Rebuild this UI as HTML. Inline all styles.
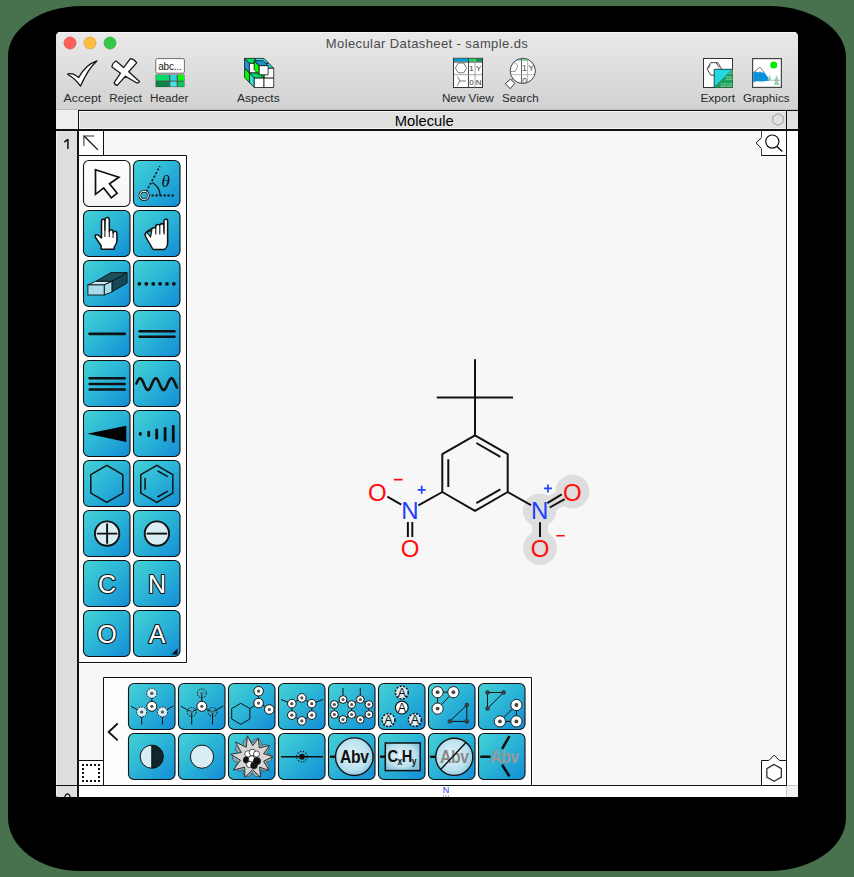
<!DOCTYPE html>
<html><head><meta charset="utf-8"><style>
html,body{margin:0;padding:0;background:rgb(71,114,77)}
body{width:854px;height:877px;overflow:hidden}
svg{display:block;font-family:"Liberation Sans",sans-serif}
</style></head><body>
<svg width="854" height="877" viewBox="0 0 854 877">
<defs>
<linearGradient id="bg" x1="0" y1="0" x2="1" y2="1"><stop offset="0" stop-color="#46d2d6"/><stop offset="0.5" stop-color="#2ab3d6"/><stop offset="1" stop-color="#128cd6"/></linearGradient>
<linearGradient id="wg" x1="0" y1="0" x2="0" y2="1"><stop offset="0" stop-color="#fefefe"/><stop offset="1" stop-color="#f4f4f4"/></linearGradient>
<linearGradient id="tbg" x1="0" y1="0" x2="0" y2="1"><stop offset="0" stop-color="#e9e9e9"/><stop offset="1" stop-color="#d2d2d2"/></linearGradient>
</defs>
<path d="M82,6 L769,6 A77,51 0 0 1 846,57 L846,818 A77,53 0 0 1 769,871 L80,871 A72,53 0 0 1 8,818 L8,56 A74,50 0 0 1 82,6 Z" fill="#000"/>
<clipPath id="wc"><path d="M61,32 L793,32 Q798,32 798,37 L798,797 L58.5,797 Q56,797 56,794.5 L56,37 Q56,32 61,32 Z"/></clipPath>
<g clip-path="url(#wc)">
<rect x="56" y="32" width="742" height="765" fill="#f7f7f7"/>
<rect x="56" y="32" width="742" height="77" fill="url(#tbg)"/>
<rect x="56" y="32" width="742" height="1" fill="#f4f4f4"/>
<rect x="56" y="109" width="742" height="1" fill="#bcbcbc"/>
<rect x="56" y="110" width="22" height="19" fill="#efefef"/>
<rect x="79" y="111" width="707" height="18" fill="#e0e0e0"/>
<rect x="79" y="111" width="707" height="1" fill="#f4f4f4"/><rect x="79" y="128" width="707" height="1" fill="#f2f2f2"/><rect x="79" y="111" width="1" height="18" fill="#f2f2f2"/>
<rect x="787" y="110" width="11" height="19" fill="#e0e0e0"/>
<rect x="78" y="110" width="720" height="1" fill="#111"/>
<rect x="78" y="110" width="1" height="20" fill="#111"/>
<rect x="786" y="110" width="1" height="20" fill="#111"/>
<rect x="56" y="129" width="742" height="2" fill="#111"/>
<rect x="57" y="131" width="20" height="654" fill="#dedede"/>
<rect x="56" y="131" width="1" height="666" fill="#efefef"/>
<rect x="77" y="131" width="2" height="666" fill="#111"/>
<rect x="786" y="131" width="1" height="655" fill="#111"/>
<rect x="787" y="131" width="11" height="655" fill="#fff"/>
<rect x="56" y="785" width="731" height="1" fill="#111"/>
<rect x="57" y="786" width="20" height="11" fill="#dedede"/>
<rect x="79" y="786" width="707" height="11" fill="#fff"/>
<rect x="787" y="785" width="11" height="1" fill="#c8c8c8"/>
<rect x="786" y="786" width="1" height="11" fill="#c8c8c8"/>
<rect x="787" y="786" width="11" height="11" fill="#f2f2f2"/>
</g>
<circle cx="70" cy="43" r="6" fill="#fc605c" stroke="#df4a45" stroke-width="0.7"/>
<circle cx="90" cy="43" r="6" fill="#fdbc40" stroke="#de9f34" stroke-width="0.7"/>
<circle cx="110" cy="43" r="6" fill="#34c84a" stroke="#27aa35" stroke-width="0.7"/>
<text x="427" y="47.6" font-size="13" fill="#4a4a4a" text-anchor="middle" letter-spacing="0.4">Molecular Datasheet - sample.ds</text>
<text x="63.6" y="101.5" font-size="10" fill="#2a2a2a" textLength="37.6" lengthAdjust="spacingAndGlyphs">Accept</text>
<text x="109.2" y="101.5" font-size="10" fill="#2a2a2a" textLength="32.8" lengthAdjust="spacingAndGlyphs">Reject</text>
<text x="150.0" y="101.5" font-size="10" fill="#2a2a2a" textLength="38.4" lengthAdjust="spacingAndGlyphs">Header</text>
<text x="237.1" y="101.5" font-size="10" fill="#2a2a2a" textLength="42.6" lengthAdjust="spacingAndGlyphs">Aspects</text>
<text x="441.9" y="101.5" font-size="10" fill="#2a2a2a" textLength="51.9" lengthAdjust="spacingAndGlyphs">New View</text>
<text x="502.0" y="101.5" font-size="10" fill="#2a2a2a" textLength="36.6" lengthAdjust="spacingAndGlyphs">Search</text>
<text x="700.4" y="101.5" font-size="10" fill="#2a2a2a" textLength="34.6" lengthAdjust="spacingAndGlyphs">Export</text>
<text x="742.9" y="101.5" font-size="10" fill="#2a2a2a" textLength="46.7" lengthAdjust="spacingAndGlyphs">Graphics</text>
<text x="394.8" y="125.6" font-size="14.3" fill="#000" textLength="59" lengthAdjust="spacingAndGlyphs">Molecule</text>
<path d="M67.9,139 L67.9,149 M67.9,139.3 L64.3,142.2" fill="none" stroke="#111" stroke-width="1.5" stroke-linecap="butt"/>
<path d="M67.6,74.2 C71,72.6 75,74.3 78.6,77.6 C83,69.5 89,63.5 96.9,60.9 C91.5,65.5 85.5,74.5 80.5,86.1 C77,81 72.5,77 67.6,74.2 Z" fill="#fff" stroke="#111" stroke-width="1.3" stroke-linejoin="round"/>
<path d="M116.1,61 L123.6,67.6 L130.4,58.7 Q134.5,59.3 136.7,62.9 L128.7,71.8 L139.5,81.6 Q138.3,83.3 136.4,82.8 L125.4,76.2 L117.2,85.4 Q114.5,85 114.2,82.6 L120.5,73.2 L111.9,66.9 Q112.3,63 116.1,61 Z" fill="#fff" stroke="#1a1a1a" stroke-width="1.3" stroke-linejoin="round"/>
<rect x="155.8" y="58.6" width="28.6" height="14.6" rx="1.5" fill="#fff" stroke="#6e6e6e" stroke-width="1"/>
<text x="158.2" y="70" font-size="10" fill="#222" letter-spacing="-0.2">abc...</text>
<rect x="155.5" y="74.5" width="29" height="12.6" fill="#555"/>
<rect x="156" y="75" width="13" height="5.6" fill="#00dd66"/>
<rect x="170.3" y="75" width="6.4" height="5.6" fill="#2ad4da"/>
<rect x="178" y="75" width="6" height="5.6" fill="#00ff00"/>
<rect x="156" y="81.6" width="13" height="5" fill="#008844"/>
<rect x="170.3" y="81.6" width="6.4" height="5" fill="#48e0e6"/>
<rect x="178" y="81.6" width="6" height="5" fill="#00cc55"/>
<polygon points="254.30,87.50 249.45,82.55 249.45,72.95 254.30,77.90" fill="#33dddd" stroke="#111" stroke-width="0.8" stroke-linejoin="round"/><polygon points="249.45,82.55 244.60,77.60 244.60,68.00 249.45,72.95" fill="#00ff00" stroke="#111" stroke-width="0.8" stroke-linejoin="round"/><polygon points="249.45,72.95 244.60,68.00 244.60,58.40 249.45,63.35" fill="#1e90d8" stroke="#111" stroke-width="0.8" stroke-linejoin="round"/><polygon points="249.45,63.35 259.15,63.35 254.30,58.40 244.60,58.40" fill="#00dd66" stroke="#111" stroke-width="0.8" stroke-linejoin="round"/><polygon points="259.15,63.35 268.85,63.35 264.00,58.40 254.30,58.40" fill="#33dddd" stroke="#111" stroke-width="0.8" stroke-linejoin="round"/><polygon points="264.00,68.30 273.70,68.30 268.85,63.35 259.15,63.35" fill="#33dddd" stroke="#111" stroke-width="0.8" stroke-linejoin="round"/><polygon points="254.30,87.50 264.00,87.50 264.00,77.90 254.30,77.90" fill="#fff" stroke="#111" stroke-width="0.8" stroke-linejoin="round"/><polygon points="264.00,87.50 273.70,87.50 273.70,77.90 264.00,77.90" fill="#fff" stroke="#111" stroke-width="0.8" stroke-linejoin="round"/><polygon points="264.00,77.90 273.70,77.90 273.70,68.30 264.00,68.30" fill="#fff" stroke="#111" stroke-width="0.8" stroke-linejoin="round"/><polygon points="249.45,72.95 259.15,72.95 259.15,63.35 249.45,63.35" fill="#fff" stroke="#111" stroke-width="0.8" stroke-linejoin="round"/><polygon points="254.30,77.90 264.00,77.90 259.15,72.95 249.45,72.95" fill="#00dd66" stroke="#111" stroke-width="0.8" stroke-linejoin="round"/><polygon points="264.00,77.90 259.15,72.95 259.15,63.35 264.00,68.30" fill="#00ff00" stroke="#111" stroke-width="0.8" stroke-linejoin="round"/><polygon points="259.20,65.70 254.20,60.70 254.20,69.70 259.20,74.80" fill="#00ff00" stroke="#111" stroke-width="0.8" stroke-linejoin="round"/><polygon points="259.20,65.70 254.20,60.70 263.20,60.70 268.10,65.70" fill="#1e90d8" stroke="#111" stroke-width="0.8" stroke-linejoin="round"/><polygon points="259.20,65.70 268.10,65.70 268.10,74.80 259.20,74.80" fill="#fff" stroke="#111" stroke-width="0.8" stroke-linejoin="round"/>
<rect x="453.5" y="58.3" width="29" height="29.2" fill="#fff" stroke="#333" stroke-width="1"/><rect x="454" y="58.8" width="14.3" height="2.8" fill="#00a0e4"/><rect x="468.8" y="58.8" width="6" height="2.8" fill="#00e060"/><rect x="475.2" y="58.8" width="6.8" height="2.8" fill="#009944"/><rect x="453.5" y="61.6" width="29" height="0.9" fill="#333"/><rect x="468" y="58.3" width="0.9" height="29.2" fill="#333"/><rect x="474.6" y="58.3" width="0.9" height="29.2" fill="#999"/><rect x="454" y="74.3" width="28" height="0.9" fill="#999"/><polygon points="466.60,67.90 463.80,63.05 458.20,63.05 455.40,67.90 458.20,72.75 463.80,72.75" fill="none" stroke="#666" stroke-width="0.9"/><path d="M457.5,76.6 L460,81 L457.2,85.6 M460,81 L465.8,81" fill="none" stroke="#666" stroke-width="0.9"/><g font-size="8" fill="#333" text-anchor="middle"><text x="471.4" y="71.4">1</text><text x="478.6" y="71.4">Y</text><text x="471.4" y="84.6">0</text><text x="478.6" y="84.6">N</text></g>
<clipPath id="sc"><circle cx="522.8" cy="70.9" r="12.3"/></clipPath>
<circle cx="522.8" cy="70.9" r="12.6" fill="#fff"/>
<g clip-path="url(#sc)">
<rect x="510" y="58" width="11" height="3" fill="#9cd8ec"/><rect x="521.5" y="58" width="6" height="3" fill="#88dd99"/>
<rect x="521" y="58" width="0.9" height="26" fill="#555"/><rect x="527.2" y="58" width="0.9" height="26" fill="#aaa"/>
<rect x="509" y="74.3" width="28" height="0.9" fill="#aaa"/>
<path d="M515,62.5 L518,66 L515,71.5 L508,71.5" fill="none" stroke="#888" stroke-width="0.9"/>
<g font-size="9" fill="#555" text-anchor="middle"><text x="524.4" y="71.2">1</text><text x="531.2" y="71.2">Y</text><text x="524.4" y="84">0</text></g>
</g>
<circle cx="522.8" cy="70.9" r="12.6" fill="none" stroke="#444" stroke-width="1"/>
<path d="M512.8,78.8 L511,80.5" stroke="#444" stroke-width="1"/>
<polygon points="505.3,83.7 510.2,88.7 514.9,83.3 510.4,79.1" fill="#fff" stroke="#333" stroke-width="1" stroke-linejoin="round"/>
<rect x="703.5" y="58.5" width="29" height="29" fill="#fff" stroke="#333" stroke-width="1"/><polygon points="721.50,68.90 717.90,62.66 710.70,62.66 707.10,68.90 710.70,75.14 717.90,75.14" fill="none" stroke="#333" stroke-width="0.9"/><path d="M710.3,64.5 L708.3,68.5 M716,62.6 L719.2,67.8" stroke="#333" stroke-width="0.8"/><polygon points="714.2,69.3 732.6,69.3 714.2,87.6" fill="#22d8dd" stroke="#0d3a44" stroke-width="0.9"/><polygon points="732.6,69.3 732.6,87.6 714.5,87.6" fill="#1ea05a"/><clipPath id="gt"><polygon points="732.6,69.3 732.6,87.6 714.5,87.6"/></clipPath><g clip-path="url(#gt)" font-size="5.6" fill="#a8dcbc"><text x="727.5" y="73.5">01</text><text x="725.5" y="80">011</text><text x="720" y="86.8">1010</text></g>
<rect x="752.6" y="58.6" width="28.8" height="28.8" fill="#fff" stroke="#444" stroke-width="1.2"/><circle cx="773.7" cy="65.1" r="3.5" fill="#00ee00"/><path d="M753.3,72.6 L759.9,67.2 L764,72" fill="none" stroke="#555" stroke-width="0.8"/><path d="M753.2,72.5 L756,71.6 L758,72.5 L760,71.5 L762,72.8 L764,72 L770.2,80.5 L762,81.5 L756,81.2 L753.2,82.6 Z" fill="#0a90d8"/><g fill="#8fd4b0" opacity="0.9"><path d="M769.5,74.5 L771.5,80 L767.5,80 Z"/><path d="M776.6,74.8 L779,81 L774.2,81 Z"/><path d="M776.6,78 L779.5,85 L773.7,85 Z"/></g><path d="M770,80.3 L780,80.3" stroke="#999" stroke-width="0.6"/>
<rect x="79" y="131" width="24" height="24" fill="#fff"/><rect x="103" y="131" width="1" height="25" fill="#111"/>
<path d="M83.8,146 L83.8,136 L94.3,136" fill="none" stroke="#777" stroke-width="1.6"/><path d="M84.3,136.3 L97.9,149.9" stroke="#111" stroke-width="1.3"/>
<polygon points="778.00,113.50 772.80,116.50 772.80,122.50 778.00,125.50 783.20,122.50 783.20,116.50" fill="none" stroke="#999" stroke-width="0.9"/>
<path d="M761.5,131 L761.5,137.5 L756.2,143 L761.5,148.5 L761.5,155.5 L786,155.5" fill="#fff" stroke="#111" stroke-width="1"/>
<rect x="761.8" y="131" width="24.2" height="23.8" fill="#fff"/>
<circle cx="772.3" cy="141.6" r="6.6" fill="none" stroke="#111" stroke-width="1.2"/><path d="M776.9,146.4 L782.3,151.6" stroke="#111" stroke-width="1.4"/>
<rect x="79" y="155" width="107" height="507" fill="#fdfdfd"/>
<path d="M79,155.5 L186.5,155.5 L186.5,662.5 L79,662.5" fill="none" stroke="#111" stroke-width="1"/>
<path d="M187.5,155 L187.5,663.5 L79,663.5" fill="none" stroke="#fff" stroke-width="1"/>
<g transform="translate(83,160)"><rect x="0.5" y="0.5" width="46.5" height="46" rx="5.5" fill="url(#wg)" stroke="#111" stroke-width="1.1"/><path d="M12.5,9.7 L35.9,17.3 L26.5,23.8 L34.1,33.1 L28.3,37.8 L20.7,27.9 L12.5,34.3 Z" fill="#fff" stroke="#111" stroke-width="1.7" stroke-linejoin="miter"/></g><g transform="translate(133,160)"><rect x="0.5" y="0.5" width="46.5" height="46" rx="5.5" fill="url(#bg)" stroke="#111" stroke-width="1.1"/><path d="M14.5,35.5 L41.5,35.5" stroke="#111" stroke-width="1.8" stroke-dasharray="2.2,1.8"/><path d="M13.2,31.6 L26.9,6.2" stroke="#111" stroke-width="1.6" stroke-dasharray="2.2,1.8"/><path d="M27.2,35.2 A16,16 0 0 0 19.3,22.5" fill="none" stroke="#111" stroke-width="1.2"/><circle cx="11.1" cy="35.5" r="4.2" fill="none" stroke="#111" stroke-width="2.6"/><circle cx="11.1" cy="35.5" r="4.2" fill="none" stroke="#fff" stroke-width="1.1"/><text x="28.6" y="27.2" font-family="Liberation Serif" font-style="italic" font-size="17" fill="#111">θ</text></g><g transform="translate(83,210)"><rect x="0.5" y="0.5" width="46.5" height="46" rx="5.5" fill="url(#bg)" stroke="#111" stroke-width="1.1"/><path d="M18.5,28 L18.5,11.3 Q18.6,9.2 20.2,9.2 Q21.8,9.2 21.9,11.3 L21.9,20 L22.1,9.6 Q22.3,7.6 24.2,7.6 Q26.2,7.6 26.3,9.6 L26.3,21.5 Q26.5,19.8 28.2,19.8 Q29.9,19.8 30.1,21.5 L30.1,23 Q30.3,21.3 32,21.3 Q33.8,21.4 33.9,23.2 L33.9,31 Q33.6,34.5 31.2,37 L31.2,39.2 L18.2,39.2 L18,35.5 L12.5,27.5 Q11.5,25.4 13.2,24.8 Q14.8,24.3 16.2,26 Z" fill="#fff" stroke="#111" stroke-width="1.5" stroke-linejoin="round"/><path d="M21.9,20 L21.9,27 M26.3,21.5 L26.3,27 M30.1,23 L30.1,28" stroke="#111" stroke-width="1"/></g><g transform="translate(133,210)"><rect x="0.5" y="0.5" width="46.5" height="46" rx="5.5" fill="url(#bg)" stroke="#111" stroke-width="1.1"/><path d="M31,22 L31,11 Q31.2,9 32.8,9 Q34.5,9 34.6,11 L34.6,34 Q34.3,37.5 31.5,39.5 L20,39.5 L12.5,26.5 Q11.5,23.5 13.5,22 L19,18.5 Q21,17.6 22.5,17.5 L22.8,15.5 Q24.6,13.6 26.6,15 L27,14.6 Q28.8,12.8 30.8,14.4 L31,22 Z" fill="#fff" stroke="#111" stroke-width="1.5" stroke-linejoin="round"/><path d="M22.8,16 L22.8,24.5 M26.8,15 L26.8,24.5 M31,22 L31,24.5" stroke="#111" stroke-width="1.1"/><polygon points="13.6,22.5 18.8,20.3 17.6,26.8" fill="url(#bg)" stroke="#111" stroke-width="1.1"/></g><g transform="translate(83,260)"><rect x="0.5" y="0.5" width="46.5" height="46" rx="5.5" fill="url(#bg)" stroke="#111" stroke-width="1.1"/><polygon points="12.6,21.4 28.9,21.4 44.1,12.6 28,12.6" fill="#1a5060" stroke="#111" stroke-width="0.9"/><polygon points="28.9,21.4 44.1,12.6 44.1,23 28.9,32" fill="#16485a" stroke="#111" stroke-width="0.9"/><polygon points="4.9,24.9 21.2,24.9 28.9,21.4 12.6,21.4" fill="#c8ecf6" stroke="#111" stroke-width="0.9"/><polygon points="21.2,24.9 28.9,21.4 28.9,32 21.2,35" fill="#a8dcec" stroke="#111" stroke-width="0.9"/><rect x="4.9" y="24.9" width="16.3" height="10.1" fill="#a8dcec" stroke="#111" stroke-width="0.9"/></g><g transform="translate(133,260)"><rect x="0.5" y="0.5" width="46.5" height="46" rx="5.5" fill="url(#bg)" stroke="#111" stroke-width="1.1"/><circle cx="6.40" cy="23.8" r="1.9" fill="#111"/><circle cx="13.30" cy="23.8" r="1.9" fill="#111"/><circle cx="20.20" cy="23.8" r="1.9" fill="#111"/><circle cx="27.10" cy="23.8" r="1.9" fill="#111"/><circle cx="34.00" cy="23.8" r="1.9" fill="#111"/><circle cx="40.90" cy="23.8" r="1.9" fill="#111"/></g><g transform="translate(83,310)"><rect x="0.5" y="0.5" width="46.5" height="46" rx="5.5" fill="url(#bg)" stroke="#111" stroke-width="1.1"/><path d="M6.6,23.8 L41.7,23.8" stroke="#111" stroke-width="2.8" stroke-linecap="round"/></g><g transform="translate(133,310)"><rect x="0.5" y="0.5" width="46.5" height="46" rx="5.5" fill="url(#bg)" stroke="#111" stroke-width="1.1"/><path d="M6.6,21.2 L41.5,21.2 M6.6,26.7 L41.5,26.7" stroke="#111" stroke-width="2.6" stroke-linecap="round"/></g><g transform="translate(83,360)"><rect x="0.5" y="0.5" width="46.5" height="46" rx="5.5" fill="url(#bg)" stroke="#111" stroke-width="1.1"/><path d="M6.6,18.3 L41.7,18.3 M6.6,23.9 L41.7,23.9 M6.6,29.4 L41.7,29.4" stroke="#111" stroke-width="2.5" stroke-linecap="round"/></g><g transform="translate(133,360)"><rect x="0.5" y="0.5" width="46.5" height="46" rx="5.5" fill="url(#bg)" stroke="#111" stroke-width="1.1"/><polyline points="3.40,23.56 3.90,22.42 4.40,21.34 4.90,20.38 5.40,19.57 5.90,18.93 6.40,18.51 6.90,18.31 7.40,18.35 7.90,18.62 8.40,19.10 8.90,19.79 9.40,20.66 9.90,21.66 10.40,22.76 10.90,23.92 11.40,25.08 11.90,26.21 12.40,27.26 12.90,28.18 13.40,28.94 13.90,29.51 14.40,29.87 14.90,30.00 15.40,29.89 15.90,29.56 16.40,29.01 16.90,28.27 17.40,27.36 17.90,26.32 18.40,25.20 18.90,24.03 19.40,22.87 19.90,21.76 20.40,20.75 20.90,19.87 21.40,19.16 21.90,18.65 22.40,18.37 22.90,18.31 23.40,18.48 23.90,18.88 24.40,19.49 24.90,20.29 25.40,21.24 25.90,22.31 26.40,23.45 26.90,24.62 27.40,25.77 27.90,26.85 28.40,27.83 28.90,28.66 29.40,29.31 29.90,29.76 30.40,29.98 30.90,29.96 31.40,29.72 31.90,29.25 32.40,28.58 32.90,27.74 33.40,26.75 33.90,25.65 34.40,24.50 34.90,23.33 35.40,22.20 35.90,21.14 36.40,20.20 36.90,19.42 37.40,18.83 37.90,18.45 38.40,18.30 38.90,18.38 39.40,18.70 39.90,19.23 40.40,19.95 40.90,20.85 41.40,21.87 41.90,22.99 42.40,24.15 42.90,25.31 43.40,26.43 43.90,27.46" fill="none" stroke="#111" stroke-width="2.6" stroke-linecap="round" stroke-linejoin="round"/></g><g transform="translate(83,410)"><rect x="0.5" y="0.5" width="46.5" height="46" rx="5.5" fill="url(#bg)" stroke="#111" stroke-width="1.1"/><polygon points="4.3,23.8 43.3,15.8 43.3,32" fill="#000"/></g><g transform="translate(133,410)"><rect x="0.5" y="0.5" width="46.5" height="46" rx="5.5" fill="url(#bg)" stroke="#111" stroke-width="1.1"/><rect x="5.9" y="22" width="2.8" height="3.8000000000000007" rx="1.3" fill="#111"/><rect x="14.3" y="20.8" width="2.8" height="6.199999999999999" rx="1.3" fill="#111"/><rect x="22.3" y="18.5" width="2.8" height="11.0" rx="1.3" fill="#111"/><rect x="30.7" y="17" width="2.8" height="14.5" rx="1.3" fill="#111"/><rect x="38.9" y="15" width="2.8" height="17.799999999999997" rx="1.3" fill="#111"/></g><g transform="translate(83,460)"><rect x="0.5" y="0.5" width="46.5" height="46" rx="5.5" fill="url(#bg)" stroke="#111" stroke-width="1.1"/><polygon points="23.80,5.40 7.78,14.65 7.78,33.15 23.80,42.40 39.82,33.15 39.82,14.65" fill="none" stroke="#111" stroke-width="1.5"/></g><g transform="translate(133,460)"><rect x="0.5" y="0.5" width="46.5" height="46" rx="5.5" fill="url(#bg)" stroke="#111" stroke-width="1.1"/><polygon points="23.80,5.40 7.78,14.65 7.78,33.15 23.80,42.40 39.82,33.15 39.82,14.65" fill="none" stroke="#111" stroke-width="1.5"/><path d="M24.53,10.79 L34.79,16.71 M12.08,17.98 L12.08,29.82 M24.53,37.01 L34.79,31.09 " stroke="#111" stroke-width="1.5"/></g><g transform="translate(83,510)"><rect x="0.5" y="0.5" width="46.5" height="46" rx="5.5" fill="url(#bg)" stroke="#111" stroke-width="1.1"/><circle cx="24.1" cy="23.6" r="12.2" fill="#d8eef4" stroke="#111" stroke-width="1.9"/><path d="M13.8,23.6 L34.4,23.6 M24.1,13.4 L24.1,33.8" stroke="#111" stroke-width="1.9"/></g><g transform="translate(133,510)"><rect x="0.5" y="0.5" width="46.5" height="46" rx="5.5" fill="url(#bg)" stroke="#111" stroke-width="1.1"/><circle cx="23.9" cy="23.6" r="12.2" fill="#d8eef4" stroke="#111" stroke-width="1.9"/><path d="M13.6,23.6 L34.2,23.6" stroke="#111" stroke-width="1.9"/></g><g transform="translate(83,560)"><rect x="0.5" y="0.5" width="46.5" height="46" rx="5.5" fill="url(#bg)" stroke="#111" stroke-width="1.1"/><text x="24" y="33" font-size="25" text-anchor="middle" fill="#fff" stroke="#111" stroke-width="2.2" paint-order="stroke" stroke-linejoin="round">C</text></g><g transform="translate(133,560)"><rect x="0.5" y="0.5" width="46.5" height="46" rx="5.5" fill="url(#bg)" stroke="#111" stroke-width="1.1"/><text x="24" y="33" font-size="25" text-anchor="middle" fill="#fff" stroke="#111" stroke-width="2.2" paint-order="stroke" stroke-linejoin="round">N</text></g><g transform="translate(83,610)"><rect x="0.5" y="0.5" width="46.5" height="46" rx="5.5" fill="url(#bg)" stroke="#111" stroke-width="1.1"/><text x="24" y="33" font-size="25" text-anchor="middle" fill="#fff" stroke="#111" stroke-width="2.2" paint-order="stroke" stroke-linejoin="round">O</text></g><g transform="translate(133,610)"><rect x="0.5" y="0.5" width="46.5" height="46" rx="5.5" fill="url(#bg)" stroke="#111" stroke-width="1.1"/><text x="24" y="33" font-size="25" text-anchor="middle" fill="#fff" stroke="#111" stroke-width="2.2" paint-order="stroke" stroke-linejoin="round">A</text><polygon points="44.5,38.5 44.5,44.6 38.4,44.6" fill="#111"/></g>
<rect x="104" y="678" width="427" height="107" fill="#fdfdfd"/>
<path d="M103.5,785 L103.5,677.5 L531.5,677.5 L531.5,785" fill="none" stroke="#111" stroke-width="1"/>
<path d="M532.5,677 L532.5,785" stroke="#fff" stroke-width="1"/>
<rect x="79" y="761" width="24" height="24" fill="#fff"/><rect x="79" y="760" width="25" height="1" fill="#111"/>
<rect x="82" y="764" width="2" height="2" fill="#111"/><rect x="82" y="768" width="2" height="2" fill="#111"/><rect x="82" y="772" width="2" height="2" fill="#111"/><rect x="82" y="776" width="2" height="2" fill="#111"/><rect x="82" y="780" width="2" height="2" fill="#111"/><rect x="86" y="764" width="2" height="2" fill="#111"/><rect x="86" y="780" width="2" height="2" fill="#111"/><rect x="90" y="764" width="2" height="2" fill="#111"/><rect x="90" y="780" width="2" height="2" fill="#111"/><rect x="94" y="764" width="2" height="2" fill="#111"/><rect x="94" y="780" width="2" height="2" fill="#111"/><rect x="98" y="764" width="2" height="2" fill="#111"/><rect x="98" y="768" width="2" height="2" fill="#111"/><rect x="98" y="772" width="2" height="2" fill="#111"/><rect x="98" y="776" width="2" height="2" fill="#111"/><rect x="98" y="780" width="2" height="2" fill="#111"/>
<path d="M117.7,723.5 L108.6,732 L117.7,740.3" fill="none" stroke="#111" stroke-width="1.8"/>
<radialGradient id="lg" cx="0.45" cy="0.45" r="0.6"><stop offset="0" stop-color="#e4f4fa"/><stop offset="0.7" stop-color="#b8e0ee"/><stop offset="1" stop-color="#86c4dc"/></radialGradient>
<g transform="translate(128,683)"><rect x="0.5" y="0.5" width="46.5" height="46" rx="5.5" fill="url(#bg)" stroke="#111" stroke-width="1.1"/><path d="M3,23.3 L13.7,29 L13.7,41.5 M45.2,23 L34.5,29 L34.5,41.5 M23.8,10.3 L23.8,23.3" stroke="#111" stroke-width="1" fill="none"/><circle cx="23.8" cy="23.3" r="5" fill="#fff" stroke="#111" stroke-width="1"/><circle cx="23.8" cy="23.3" r="1.6" fill="#555"/><circle cx="23.8" cy="10.3" r="5" fill="#d8eef4" stroke="#111" stroke-width="1" stroke-dasharray="1.6,1.2"/><circle cx="23.8" cy="10.3" r="1.6" fill="#555"/><circle cx="13.7" cy="29" r="5" fill="#d8eef4" stroke="#111" stroke-width="1" stroke-dasharray="1.6,1.2"/><circle cx="13.7" cy="29" r="1.6" fill="#555"/><circle cx="34.5" cy="29" r="5" fill="#d8eef4" stroke="#111" stroke-width="1" stroke-dasharray="1.6,1.2"/><circle cx="34.5" cy="29" r="1.6" fill="#555"/></g><g transform="translate(178,683)"><rect x="0.5" y="0.5" width="46.5" height="46" rx="5.5" fill="url(#bg)" stroke="#111" stroke-width="1.1"/><path d="M3,23.3 L13.7,29 L13.7,41.5 M45.2,23 L34.5,29 L34.5,41.5 M23.8,10.3 L23.8,23.3 M13.7,29 L23.8,23.3 L34.5,29" stroke="#111" stroke-width="1" fill="none"/><circle cx="23.8" cy="23.3" r="5" fill="#fff" stroke="#111" stroke-width="1"/><circle cx="23.8" cy="23.3" r="1.6" fill="#555"/><circle cx="23.8" cy="10.3" r="4.5" fill="none" stroke="#111" stroke-width="1" stroke-dasharray="1.6,1.2"/><circle cx="23.8" cy="10.3" r="1.6" fill="#666"/><circle cx="13.7" cy="29" r="4.5" fill="none" stroke="#111" stroke-width="1" stroke-dasharray="1.6,1.2"/><circle cx="13.7" cy="29" r="1.6" fill="#666"/><circle cx="34.5" cy="29" r="4.5" fill="none" stroke="#111" stroke-width="1" stroke-dasharray="1.6,1.2"/><circle cx="34.5" cy="29" r="1.6" fill="#666"/></g><g transform="translate(228,683)"><rect x="0.5" y="0.5" width="46.5" height="46" rx="5.5" fill="url(#bg)" stroke="#111" stroke-width="1.1"/><polygon points="12.80,20.30 3.71,25.55 3.71,36.05 12.80,41.30 21.89,36.05 21.89,25.55" fill="none" stroke="#111" stroke-width="1"/><path d="M21.89,25.55 L30.6,20.1 L30.6,9.1 M30.6,20.1 L41.3,25.5" fill="none" stroke="#111" stroke-width="1"/><circle cx="30.6" cy="20.1" r="4.8" fill="#fff" stroke="#111" stroke-width="1"/><circle cx="30.6" cy="20.1" r="1.6" fill="#555"/><circle cx="30.6" cy="8.2" r="4.8" fill="#fff" stroke="#111" stroke-width="1"/><circle cx="30.6" cy="8.2" r="1.6" fill="#555"/><circle cx="41.3" cy="26.5" r="4.8" fill="#fff" stroke="#111" stroke-width="1"/><circle cx="41.3" cy="26.5" r="1.6" fill="#555"/></g><g transform="translate(278,683)"><rect x="0.5" y="0.5" width="46.5" height="46" rx="5.5" fill="url(#bg)" stroke="#111" stroke-width="1.1"/><polygon points="23.80,14.90 13.84,20.65 13.84,32.15 23.80,37.90 33.76,32.15 33.76,20.65" fill="none" stroke="#111" stroke-width="1"/><path d="M3,16.5 L13.84,20.65 M45,16.5 L33.76,20.65" stroke="#111" stroke-width="1"/><circle cx="23.8" cy="14.899999999999999" r="4.3" fill="#fff" stroke="#111" stroke-width="1"/><circle cx="23.8" cy="14.899999999999999" r="1.6" fill="#555"/><circle cx="13.840707856478955" cy="20.65" r="4.3" fill="#fff" stroke="#111" stroke-width="1"/><circle cx="13.840707856478955" cy="20.65" r="1.6" fill="#555"/><circle cx="13.840707856478957" cy="32.15" r="4.3" fill="#fff" stroke="#111" stroke-width="1"/><circle cx="13.840707856478957" cy="32.15" r="1.6" fill="#555"/><circle cx="23.799999999999997" cy="37.9" r="4.3" fill="#fff" stroke="#111" stroke-width="1"/><circle cx="23.799999999999997" cy="37.9" r="1.6" fill="#555"/><circle cx="33.759292143521044" cy="32.150000000000006" r="4.3" fill="#fff" stroke="#111" stroke-width="1"/><circle cx="33.759292143521044" cy="32.150000000000006" r="1.6" fill="#555"/><circle cx="33.759292143521044" cy="20.65" r="4.3" fill="#fff" stroke="#111" stroke-width="1"/><circle cx="33.759292143521044" cy="20.65" r="1.6" fill="#555"/></g><g transform="translate(328,683)"><rect x="0.5" y="0.5" width="46.5" height="46" rx="5.5" fill="url(#bg)" stroke="#111" stroke-width="1.1"/><polygon points="15.00,16.50 6.34,21.50 6.34,31.50 15.00,36.50 23.66,31.50 23.66,21.50" fill="none" stroke="#111" stroke-width="1"/><polygon points="32.30,16.50 23.64,21.50 23.64,31.50 32.30,36.50 40.96,31.50 40.96,21.50" fill="none" stroke="#111" stroke-width="1"/><path d="M15,16.5 L15,5 M32.3,16.5 L32.3,5" stroke="#111" stroke-width="1"/><circle cx="15.0" cy="16.5" r="3.9" fill="#fff" stroke="#111" stroke-width="1"/><circle cx="15.0" cy="16.5" r="1.6" fill="#555"/><circle cx="6.339745962155613" cy="21.5" r="3.9" fill="#fff" stroke="#111" stroke-width="1"/><circle cx="6.339745962155613" cy="21.5" r="1.6" fill="#555"/><circle cx="6.3397459621556145" cy="31.5" r="3.9" fill="#fff" stroke="#111" stroke-width="1"/><circle cx="6.3397459621556145" cy="31.5" r="1.6" fill="#555"/><circle cx="14.999999999999998" cy="36.5" r="3.9" fill="#fff" stroke="#111" stroke-width="1"/><circle cx="14.999999999999998" cy="36.5" r="1.6" fill="#555"/><circle cx="23.660254037844382" cy="31.500000000000004" r="3.9" fill="#fff" stroke="#111" stroke-width="1"/><circle cx="23.660254037844382" cy="31.500000000000004" r="1.6" fill="#555"/><circle cx="23.660254037844386" cy="21.5" r="3.9" fill="#fff" stroke="#111" stroke-width="1"/><circle cx="23.660254037844386" cy="21.5" r="1.6" fill="#555"/><circle cx="32.3" cy="16.5" r="3.9" fill="#fff" stroke="#111" stroke-width="1"/><circle cx="32.3" cy="16.5" r="1.6" fill="#555"/><circle cx="32.3" cy="36.5" r="3.9" fill="#fff" stroke="#111" stroke-width="1"/><circle cx="32.3" cy="36.5" r="1.6" fill="#555"/><circle cx="40.96025403784438" cy="31.500000000000004" r="3.9" fill="#fff" stroke="#111" stroke-width="1"/><circle cx="40.96025403784438" cy="31.500000000000004" r="1.6" fill="#555"/><circle cx="40.96025403784438" cy="21.5" r="3.9" fill="#fff" stroke="#111" stroke-width="1"/><circle cx="40.96025403784438" cy="21.5" r="1.6" fill="#555"/></g><g transform="translate(378,683)"><rect x="0.5" y="0.5" width="46.5" height="46" rx="5.5" fill="url(#bg)" stroke="#111" stroke-width="1.1"/><circle cx="23.8" cy="24.6" r="6.4" fill="#fff" stroke="#111" stroke-width="1.2"/><text x="23.8" y="29.0" font-size="12.5" text-anchor="middle" fill="#111">A</text><circle cx="23.8" cy="9.5" r="6.4" fill="#d8eef4" stroke="#111" stroke-width="1.5" stroke-dasharray="2,1.4"/><text x="23.8" y="13.9" font-size="12.5" text-anchor="middle" fill="#111">A</text><circle cx="10.5" cy="37" r="6.4" fill="#d8eef4" stroke="#111" stroke-width="1.5" stroke-dasharray="2,1.4"/><text x="10.5" y="41.4" font-size="12.5" text-anchor="middle" fill="#111">A</text><circle cx="36.8" cy="37" r="6.4" fill="#d8eef4" stroke="#111" stroke-width="1.5" stroke-dasharray="2,1.4"/><text x="36.8" y="41.4" font-size="12.5" text-anchor="middle" fill="#111">A</text></g><g transform="translate(428,683)"><rect x="0.5" y="0.5" width="46.5" height="46" rx="5.5" fill="url(#bg)" stroke="#111" stroke-width="1.1"/><path d="M9.6,9.2 L25.4,9.2 L9.6,25.6 Z M38.8,22 L38.8,38.4 L21.8,38.4 Z" fill="none" stroke="#111" stroke-width="1"/><circle cx="9.6" cy="9.2" r="5.6" fill="#fff" stroke="#111" stroke-width="0.9"/><circle cx="9.6" cy="9.2" r="1.9" fill="#444"/><circle cx="25.4" cy="9.2" r="5.6" fill="#fff" stroke="#111" stroke-width="0.9"/><circle cx="25.4" cy="9.2" r="1.9" fill="#444"/><circle cx="9.6" cy="25.6" r="5.6" fill="#fff" stroke="#111" stroke-width="0.9"/><circle cx="9.6" cy="25.6" r="1.9" fill="#444"/><circle cx="38.8" cy="22" r="1.9" fill="#444" stroke="#111" stroke-width="0.5"/><circle cx="38.8" cy="38.4" r="1.9" fill="#444" stroke="#111" stroke-width="0.5"/><circle cx="21.8" cy="38.4" r="1.9" fill="#444" stroke="#111" stroke-width="0.5"/></g><g transform="translate(478,683)"><rect x="0.5" y="0.5" width="46.5" height="46" rx="5.5" fill="url(#bg)" stroke="#111" stroke-width="1.1"/><path d="M9.5,9.5 L25.6,9.5 L9.5,25.6 Z M38.4,22 L38.4,38.4 L21.9,38.4 Z" fill="none" stroke="#111" stroke-width="1"/><circle cx="9.5" cy="9.5" r="1.9" fill="#444" stroke="#111" stroke-width="0.5"/><circle cx="25.6" cy="9.5" r="1.9" fill="#444" stroke="#111" stroke-width="0.5"/><circle cx="9.5" cy="25.6" r="1.9" fill="#444" stroke="#111" stroke-width="0.5"/><circle cx="38.4" cy="22" r="5.6" fill="#fff" stroke="#111" stroke-width="0.9"/><circle cx="38.4" cy="22" r="1.9" fill="#444"/><circle cx="38.4" cy="38.4" r="5.6" fill="#fff" stroke="#111" stroke-width="0.9"/><circle cx="38.4" cy="38.4" r="1.9" fill="#444"/><circle cx="21.9" cy="38.4" r="5.6" fill="#fff" stroke="#111" stroke-width="0.9"/><circle cx="21.9" cy="38.4" r="1.9" fill="#444"/></g><g transform="translate(128,733)"><rect x="0.5" y="0.5" width="46.5" height="46" rx="5.5" fill="url(#bg)" stroke="#111" stroke-width="1.1"/><path d="M23.8,12.1 A11.6,11.6 0 0 0 23.8,35.3 Z" fill="#d8eef4"/><path d="M23.8,12.1 A11.6,11.6 0 0 1 23.8,35.3 Z" fill="#10252c"/><circle cx="23.8" cy="23.7" r="11.6" fill="none" stroke="#111" stroke-width="1"/><path d="M23.8,12.1 L23.8,35.3" stroke="#111" stroke-width="1"/></g><g transform="translate(178,733)"><rect x="0.5" y="0.5" width="46.5" height="46" rx="5.5" fill="url(#bg)" stroke="#111" stroke-width="1.1"/><circle cx="24" cy="23.7" r="11.6" fill="#d8eef4" stroke="#111" stroke-width="1"/></g><g transform="translate(228,733)"><rect x="0.5" y="0.5" width="46.5" height="46" rx="5.5" fill="url(#bg)" stroke="#111" stroke-width="1.1"/><circle cx="39.70" cy="24.70" r="4.2" fill="#8fa9b4" stroke="#333" stroke-width="0.6"/><circle cx="36.74" cy="33.81" r="4.2" fill="#8fa9b4" stroke="#333" stroke-width="0.6"/><circle cx="28.99" cy="39.44" r="4.2" fill="#8fa9b4" stroke="#333" stroke-width="0.6"/><circle cx="19.41" cy="39.44" r="4.2" fill="#8fa9b4" stroke="#333" stroke-width="0.6"/><circle cx="11.66" cy="33.81" r="4.2" fill="#8fa9b4" stroke="#333" stroke-width="0.6"/><circle cx="8.70" cy="24.70" r="4.2" fill="#8fa9b4" stroke="#333" stroke-width="0.6"/><circle cx="11.66" cy="15.59" r="4.2" fill="#8fa9b4" stroke="#333" stroke-width="0.6"/><circle cx="19.41" cy="9.96" r="4.2" fill="#8fa9b4" stroke="#333" stroke-width="0.6"/><circle cx="28.99" cy="9.96" r="4.2" fill="#8fa9b4" stroke="#333" stroke-width="0.6"/><circle cx="36.74" cy="15.59" r="4.2" fill="#8fa9b4" stroke="#333" stroke-width="0.6"/><circle cx="24.2" cy="24.7" r="15" fill="#8fa9b4"/><polygon points="19.40,2.80 24.73,12.71 30.30,5.30 31.27,15.00 41.60,12.40 35.54,20.76 44.90,23.60 35.67,28.21 41.00,37.40 31.59,34.16 32.60,44.40 24.49,36.70 16.90,44.40 16.72,34.09 5.30,37.10 12.47,27.22 2.80,21.30 13.41,19.45 7.30,9.00 18.25,14.28" fill="#d6d6d6" stroke="#222" stroke-width="0.9" stroke-linejoin="miter"/><circle cx="20" cy="21" r="3.3" fill="#fff" stroke="#111" stroke-width="0.7"/><circle cx="24.5" cy="19.5" r="3.3" fill="#fff" stroke="#111" stroke-width="0.7"/><circle cx="28.5" cy="21" r="3" fill="#fff" stroke="#111" stroke-width="0.7"/><circle cx="18.5" cy="27" r="3.2" fill="#111" stroke="#111" stroke-width="0.7"/><circle cx="23.5" cy="26" r="3.2" fill="#fff" stroke="#111" stroke-width="0.7"/><circle cx="29" cy="28" r="3.6" fill="#111" stroke="#111" stroke-width="0.7"/><circle cx="21.5" cy="31.5" r="3.1" fill="#fff" stroke="#111" stroke-width="0.7"/><circle cx="26" cy="32.5" r="3.3" fill="#111" stroke="#111" stroke-width="0.7"/></g><g transform="translate(278,733)"><rect x="0.5" y="0.5" width="46.5" height="46" rx="5.5" fill="url(#bg)" stroke="#111" stroke-width="1.1"/><path d="M3,23.7 L45,23.7" stroke="#111" stroke-width="1.5"/><circle cx="24" cy="23.7" r="2.9" fill="#111"/><circle cx="24" cy="23.7" r="5.3" fill="none" stroke="#111" stroke-width="1.2" stroke-dasharray="1.2,1.6"/></g><g transform="translate(328,733)"><rect x="0.5" y="0.5" width="46.5" height="46" rx="5.5" fill="url(#bg)" stroke="#111" stroke-width="1.1"/><path d="M2,23.7 L8,23.7" stroke="#111" stroke-width="2.4"/><circle cx="26.3" cy="23.7" r="18.8" fill="url(#lg)" stroke="#111" stroke-width="1.4"/><g transform="translate(26.3,0) scale(0.9,1)"><text x="0" y="29.8" font-size="17.5" font-weight="bold" text-anchor="middle" fill="#111" letter-spacing="-0.5">Abv</text></g></g><g transform="translate(378,733)"><rect x="0.5" y="0.5" width="46.5" height="46" rx="5.5" fill="url(#bg)" stroke="#111" stroke-width="1.1"/><path d="M2,23.7 L7.5,23.7" stroke="#111" stroke-width="2.4"/><rect x="7.3" y="10" width="34.9" height="27.6" fill="url(#lg)" stroke="#111" stroke-width="1.5"/><g transform="translate(9.5,0) scale(0.86,1)"><text x="0" y="29.5" font-size="17" font-weight="bold" fill="#111" letter-spacing="-0.6">C<tspan font-size="10" dy="3">x</tspan><tspan font-size="17" dy="-3">H</tspan><tspan font-size="10" dy="3">y</tspan></text></g></g><g transform="translate(428,733)"><rect x="0.5" y="0.5" width="46.5" height="46" rx="5.5" fill="url(#bg)" stroke="#111" stroke-width="1.1"/><path d="M2,23.8 L7.8,23.8" stroke="#111" stroke-width="2.4"/><circle cx="26.3" cy="23.8" r="18.6" fill="url(#lg)" stroke="#111" stroke-width="1.4"/><g transform="translate(26.3,0) scale(0.9,1)"><text x="0" y="29.8" font-size="17.5" font-weight="bold" text-anchor="middle" fill="#8a8a8a" letter-spacing="-0.5">Abv</text></g><path d="M38.2,9.2 L12.6,36.6" stroke="#111" stroke-width="1.4"/></g><g transform="translate(478,733)"><rect x="0.5" y="0.5" width="46.5" height="46" rx="5.5" fill="url(#bg)" stroke="#111" stroke-width="1.1"/><path d="M2.2,23.8 L12.6,23.8 M24.1,15.9 L31.4,3.1 M24.1,31.7 L31.4,43.3" stroke="#111" stroke-width="2.6"/><g transform="translate(26.3,0) scale(0.9,1)"><text x="0" y="29.8" font-size="17.5" font-weight="bold" text-anchor="middle" fill="#999" letter-spacing="-0.5">Abv</text></g></g>
<path d="M761.5,785 L761.5,760.5 L768.8,760.5 L774.1,755.2 L779.4,760.5 L786,760.5" fill="#fff" stroke="#111" stroke-width="1"/>
<rect x="762" y="761" width="24" height="24" fill="#fff"/>
<polygon points="774.10,764.40 766.83,768.60 766.83,777.00 774.10,781.20 781.37,777.00 781.37,768.60" fill="none" stroke="#333" stroke-width="1.3"/>
<text x="446" y="793.2" font-size="9" text-anchor="middle" fill="#2b3cf0">N</text><path d="M443.5,795 L443.5,797 M446,795 L446,797 M448.5,795 L448.5,797" stroke="#999" stroke-width="0.8"/>
<path d="M64.8,797 Q65.5,793.8 67.5,793.8 Q69.5,793.8 70.2,797" fill="none" stroke="#111" stroke-width="1.2"/>
<g fill="#dedede"><circle cx="572.5" cy="491.6" r="17"/><circle cx="539.7" cy="510.2" r="16.8"/><circle cx="540" cy="548" r="17"/></g><path d="M539.7,510.2 L540,548 M539.7,510.2 L572.5,491.6" stroke="#dedede" stroke-width="16"/><path d="M475,435.3 L507.7,454.2 L507.7,492 L475,510.9 L442.3,492 L442.3,454.2 Z" fill="none" stroke="#111" stroke-width="2" stroke-linejoin="round"/><path d="M476.33,443.00 L500.37,456.89 M500.37,489.31 L476.33,503.20 M448.30,487.00 L448.30,459.20 " stroke="#111" stroke-width="2"/><path d="M475,435.3 L475,359.3 M436.8,397.5 L513,397.5 M442.3,492 L418.4,505.3 M401.3,504.6 L387.3,496.7 M407.9,522 L407.9,537 M412.3,522 L412.3,537 M507.7,492 L531,505.2 M547.3,503.1 L561.7,494.3 M549.7,507.5 L564.7,499.1 M540,522.2 L540,537" stroke="#111" stroke-width="2"/><g font-size="24" text-anchor="middle"><text x="410" y="519" fill="#2040ff">N</text><text x="539.7" y="519" fill="#2040ff">N</text><text x="377.3" y="500.7" fill="#ff0d0d">O</text><text x="410.1" y="557" fill="#ff0d0d">O</text><text x="572.4" y="500.7" fill="#ff0d0d">O</text><text x="540" y="557" fill="#ff0d0d">O</text></g><path d="M417.7,489.8 L425.7,489.8 M421.7,485.8 L421.7,493.8 M543.9,488.4 L551.9,488.4 M547.9,484.4 L547.9,492.4" stroke="#2040ff" stroke-width="1.7"/><path d="M393.9,479.6 L402.5,479.6 M556.3,535.7 L564.7,535.7" stroke="#ff0d0d" stroke-width="1.6"/>
</svg></body></html>
